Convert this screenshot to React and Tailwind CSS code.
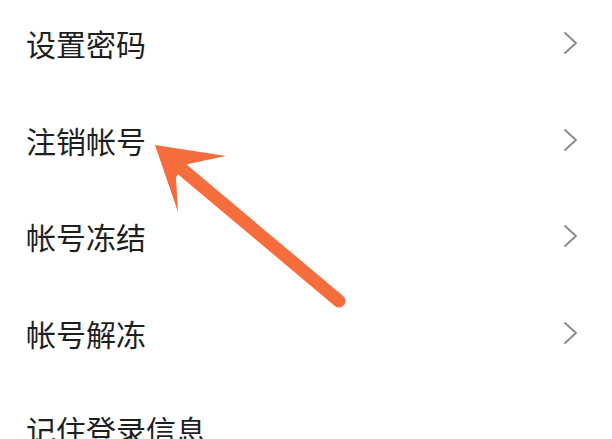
import React from "react";

const items = ["设置密码", "注销帐号", "帐号冻结", "帐号解冻", "记住登录信息"];

function Chevron() {
  return (
    <svg width="16" height="24" viewBox="0 0 16 24" className="shrink-0">
      <path d="M2 2 L13 12 L2 22" fill="none" stroke="#8c8c8c" strokeWidth="2" strokeLinecap="round" strokeLinejoin="round" />
    </svg>
  );
}

export default function App() {
  return (
    <div
      className="relative w-[612px] h-[439px] overflow-hidden bg-white"
      style={{ fontFamily: '"Noto Sans CJK SC", "Noto Sans", sans-serif' }}
    >
      <div className="flex flex-col -mt-[5px]">
        {items.map((t, i) => (
          <div key={t} className="flex h-[96.5px] items-center justify-between pl-[26px] pr-[33px]">
            <span className="text-[30px] leading-none text-[#1f1f1f]">{t}</span>
            {i < 4 && <Chevron />}
          </div>
        ))}
      </div>
      <svg className="absolute left-0 top-0 pointer-events-none" width="612" height="439" viewBox="0 0 612 439">
        <line x1="183" y1="170" x2="339" y2="301" stroke="#f56d3c" strokeWidth="13" strokeLinecap="round" />
        <polygon points="155,145 226,156 188,164 176,177 178,212" fill="#f56d3c" />
      </svg>
    </div>
  );
}
